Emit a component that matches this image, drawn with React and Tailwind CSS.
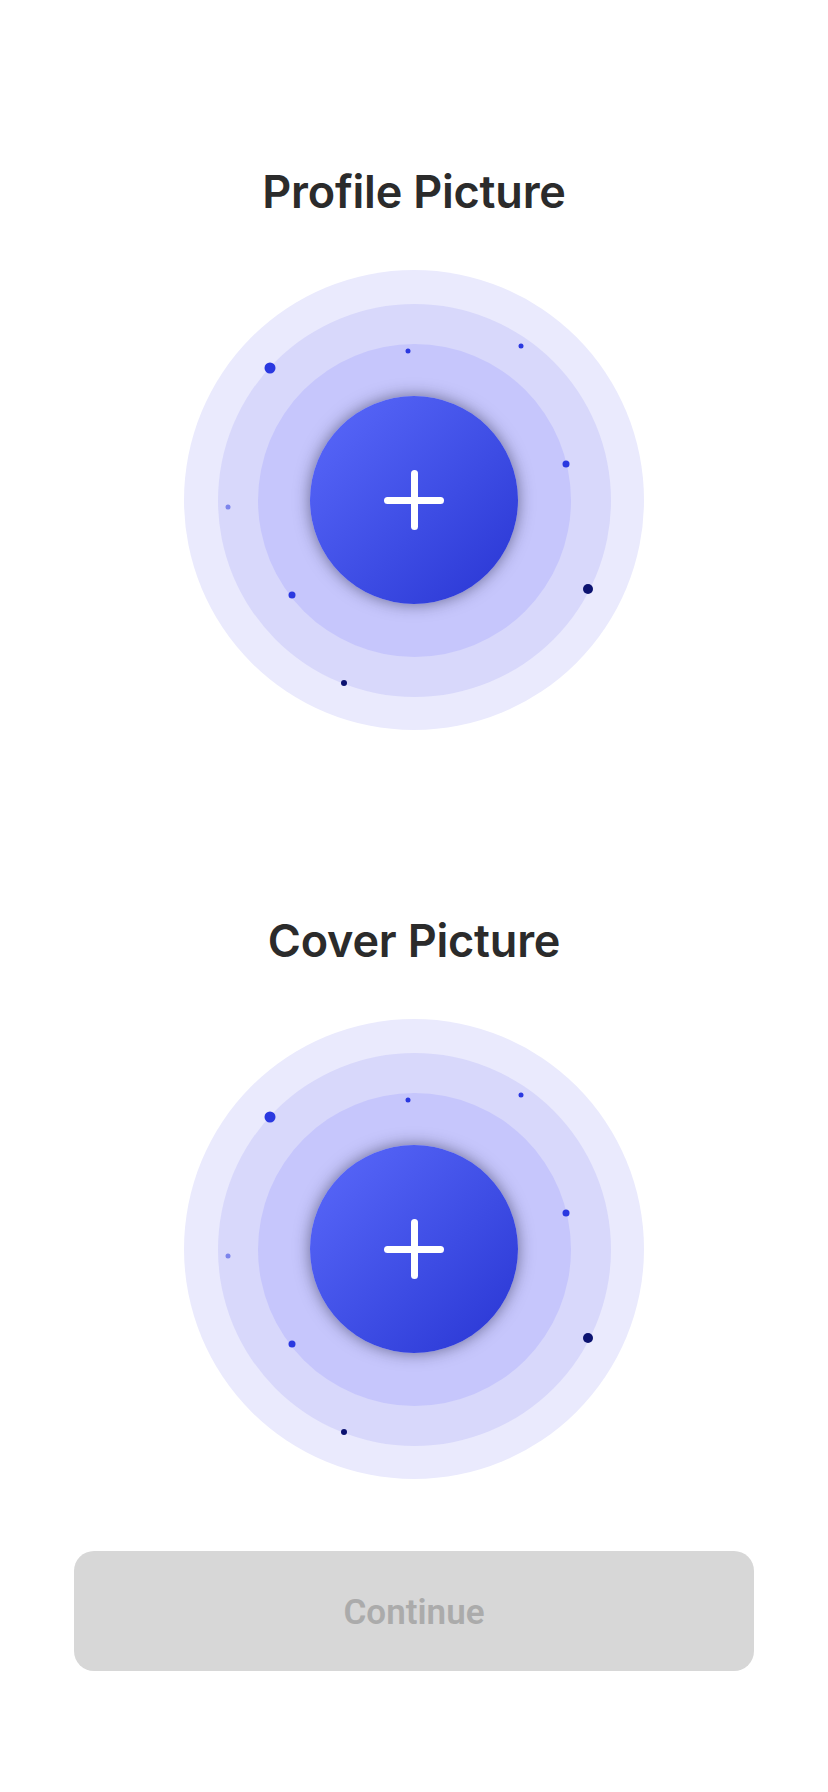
import React from 'react';

// dots scattered over the rings, positions relative to the 460px outer ring
const dots = [
    { x: 86, y: 98, size: 'w-[11px] h-[11px]', color: 'bg-[#2a38e0]' },
    { x: 224, y: 81, size: 'w-[5px] h-[5px]', color: 'bg-[#2a38e0]' },
    { x: 337, y: 76, size: 'w-[5px] h-[5px]', color: 'bg-[#2a38e0]' },
    { x: 382, y: 194, size: 'w-[7px] h-[7px]', color: 'bg-[#2a38e0]' },
    { x: 404, y: 319, size: 'w-[10px] h-[10px]', color: 'bg-[#0b1270]' },
    { x: 44, y: 237, size: 'w-[5px] h-[5px]', color: 'bg-[#7c84ec]' },
    { x: 108, y: 325, size: 'w-[7px] h-[7px]', color: 'bg-[#2a38e0]' },
    { x: 160, y: 413, size: 'w-[6px] h-[6px]', color: 'bg-[#0b1270]' },
];

const PickerRings = ({ label }) => (
    <button
        type="button"
        aria-label={`Add ${label}`}
        className="relative flex h-[460px] w-[460px] items-center justify-center rounded-full bg-[#eaeafd]"
    >
        <span className="flex h-[393px] w-[393px] items-center justify-center rounded-full bg-[#d8d8fb]">
            <span className="flex h-[313px] w-[313px] items-center justify-center rounded-full bg-[#c6c6fc]">
                <span className="relative flex h-[208px] w-[208px] items-center justify-center rounded-full bg-linear-to-br from-[#5b69fb] to-[#2934d3] shadow-[0_0_16px_rgba(30,30,60,0.55)]">
                    <span className="absolute h-[7px] w-[60px] rounded-full bg-white" />
                    <span className="absolute h-[60px] w-[7px] rounded-full bg-white" />
                </span>
            </span>
        </span>
        {dots.map((d, i) => (
            <span
                key={i}
                className={`absolute -translate-x-1/2 -translate-y-1/2 rounded-full ${d.size} ${d.color}`}
                style={{ left: d.x, top: d.y }}
            />
        ))}
    </button>
);

const Section = ({ title, className }) => (
    <section className={`flex flex-col items-center ${className}`}>
        <h2 className="text-[45px] font-semibold leading-[52px] tracking-[-0.2px] text-[#2b2b2b]">{title}</h2>
        <div className="mt-[52px]">
            <PickerRings label={title} />
        </div>
    </section>
);

export default function App() {
    return (
        <div
            className="flex h-[1792px] w-[828px] flex-col items-center bg-white"
            style={{ fontFamily: 'Inter, "Noto Sans", sans-serif' }}
        >
            <Section title="Profile Picture" className="mt-[166px]" />
            <Section title="Cover Picture" className="mt-[185px]" />
            <button
                type="button"
                disabled
                className="mt-[72px] flex h-[120px] w-[680px] items-center justify-center rounded-[20px] bg-[#d7d7d7] pt-[5px] text-[35px] font-semibold text-[#ababab]"
                style={{ fontFamily: 'Roboto, "Liberation Sans", sans-serif' }}
            >
                Continue
            </button>
        </div>
    );
}
